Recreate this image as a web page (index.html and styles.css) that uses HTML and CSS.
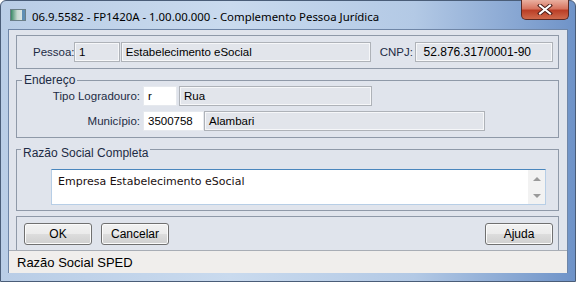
FILE: index.html
```html
<!DOCTYPE html>
<html lang="pt-br">
<head>
    <meta charset="UTF-8">
    <title>Complemento Pessoa Jurídica</title>
    <link rel="stylesheet" href="styles.css">
</head>
<body>
    <div class="window">
        <div class="titlebar">
            <span class="app-icon"><span class="app-icon-bar"></span></span>
            <span class="title">06.9.5582 - FP1420A - 1.00.00.000 - Complemento Pessoa Jurídica</span>
            <span class="close">
                <svg width="16" height="11" viewBox="0 0 16 11">
                    <path d="M3 1.5 L13 9.5 M13 1.5 L3 9.5" stroke="#4a1d18" stroke-width="4" stroke-linecap="square"/>
                    <path d="M3 1.5 L13 9.5 M13 1.5 L3 9.5" stroke="#ffffff" stroke-width="2" stroke-linecap="square"/>
                </svg>
            </span>
        </div>

        <div class="client">
            <div class="panel pessoa">
                <span class="label lbl-pessoa">Pessoa:</span>
                <span class="field ro w-cod">1</span>
                <span class="field ro w-nome">Estabelecimento eSocial</span>
                <span class="label lbl-cnpj">CNPJ:</span>
                <span class="field ro w-cnpj">52.876.317/0001-90</span>
            </div>

            <fieldset class="group endereco">
                <legend>Endereço</legend>
                <div class="form-row">
                    <span class="label row-label">Tipo Logradouro:</span>
                    <span class="field edit w-tipo">r</span>
                    <span class="field ro w-rua">Rua</span>
                </div>
                <div class="form-row">
                    <span class="label row-label">Município:</span>
                    <span class="field edit w-mun">3500758</span>
                    <span class="field ro w-munnome">Alambari</span>
                </div>
            </fieldset>

            <fieldset class="group razao">
                <legend>Razão Social Completa</legend>
                <div class="memo">
                    <span class="memo-text">Empresa Estabelecimento eSocial</span>
                    <span class="scroll">
                        <span class="arrow up"></span>
                        <span class="arrow down"></span>
                    </span>
                </div>
            </fieldset>

            <div class="panel buttons">
                <button class="btn">OK</button>
                <button class="btn">Cancelar</button>
                <button class="btn push-right">Ajuda</button>
            </div>

            <div class="statusbar">Razão Social SPED</div>
        </div>
    </div>
</body>
</html>
```

FILE: styles.css
```css
body {
    margin: 0;
    background-color: #ffffff;
}
.window {
    width: 576px;
    height: 282px;
    box-sizing: border-box;
    padding: 0 7px 8px 7px;
    display: flex;
    flex-direction: column;
    border-radius: 6px 6px 0 0;
    border: 1px solid #4a5d78;
    background: linear-gradient(to right, #b9cde6 0%, #c9daee 40%, #b3c9e5 72%, #6f93c8 100%);
}
.titlebar {
    height: 28px;
    display: flex;
    align-items: center;
    flex-shrink: 0;
}
.app-icon {
    width: 14px;
    height: 10px;
    margin: 0 6px 0 2px;
    background: linear-gradient(to right, #3a8a66, #c7d9d0 45%, #e8eef0);
    border: 1px solid #6b7f88;
    display: flex;
    justify-content: flex-end;
}
.app-icon-bar {
    width: 3px;
    background-color: #5f8fb5;
}
.title {
    font-family: "Noto Sans", sans-serif;
    font-size: 11.4px;
    color: #000000;
    margin-top: 2px;
}
.close {
    margin-left: auto;
    align-self: flex-start;
    margin-top: -1px;
    margin-right: -1px;
    width: 48px;
    height: 20px;
    display: flex;
    align-items: center;
    justify-content: center;
    border: 1px solid #5a2a25;
    border-top: none;
    border-radius: 0 0 5px 5px;
    box-sizing: border-box;
    background: linear-gradient(to bottom, #eab0a0 0%, #d77560 45%, #bb3f27 55%, #cf6a4c 100%);
}
.client {
    flex: 1;
    display: flex;
    flex-direction: column;
    background-color: #e0e4ec;
    border: 1px solid #6f86a7;
    border-bottom: none;
    font-family: "Liberation Sans", Arial, sans-serif;
    font-size: 11px;
}
.panel {
    display: flex;
    align-items: center;
    margin: 0 8px 0 7px;
    border: 1px solid #8f99a8;
}
.pessoa {
    margin-top: 5px;
    height: 34px;
    box-sizing: border-box;
    padding: 0 5px 0 16px;
}
.label {
    color: #1d2b44;
    white-space: nowrap;
    font-size: 11.5px;
}
.lbl-pessoa {
    width: 38px;
    padding-right: 3px;
}
.lbl-cnpj {
    margin-left: 9px;
    width: 35px;
}
.field {
    height: 20px;
    box-sizing: border-box;
    display: flex;
    align-items: center;
    padding-left: 4px;
    color: #000000;
    white-space: nowrap;
    font-size: 11.5px;
}
.ro {
    background-color: #e2e5eb;
    border: 1px solid #aeb2b8;
    box-shadow: inset 0 0 0 1px #f6f7f9;
}
.edit {
    background-color: #ffffff;
    border: 1px solid #e6e9ee;
}
.w-cod { width: 46px; }
.w-nome { width: 251px; margin-left: 1px; }
.w-cnpj { width: 139px; font-size: 12px; padding-left: 8px; }
.w-tipo { width: 34px; }
.w-rua { width: 193px; margin-left: 2px; }
.w-mun { width: 61px; }
.w-munnome { width: 281px; margin-left: 0; }

.group {
    margin: 5px 8px 0 7px;
    border: 1px solid #8f99a8;
    padding: 0 0 6px 0;
    min-width: 0;
}
.group legend {
    font-size: 12px;
    color: #1d2b44;
    padding: 0 2px;
    margin-left: 5px;
}
.endereco legend {
    line-height: 12px;
}
.form-row {
    display: flex;
    align-items: center;
    margin-top: 0;
}
.form-row + .form-row {
    margin-top: 5px;
}
.row-label {
    width: 123px;
    padding-right: 3px;
    text-align: right;
}

.razao {
    margin-top: 2px;
    padding-bottom: 5px;
}
.razao legend {
    line-height: 10px;
    padding-top: 8px;
    margin-left: 4px;
}
.memo {
    margin: 11px 12px 0 34px;
    height: 36px;
    box-sizing: border-box;
    background-color: #ffffff;
    border: 1px solid #b7cee6;
    border-top-color: #4a86bd;
    display: flex;
}
.memo-text {
    flex: 1;
    padding: 5px 0 0 6px;
    font-family: "DejaVu Sans", sans-serif;
    font-size: 11px;
    color: #1a0f0f;
}
.scroll {
    width: 17px;
    background-color: #f2f2f2;
    display: flex;
    flex-direction: column;
    justify-content: space-around;
    align-items: center;
}
.arrow {
    width: 0;
    height: 0;
    border-left: 4px solid transparent;
    border-right: 4px solid transparent;
}
.arrow.up {
    border-bottom: 4px solid #9a9a9a;
}
.arrow.down {
    border-top: 4px solid #9a9a9a;
}

.buttons {
    margin-top: 5px;
    height: 34px;
    box-sizing: border-box;
    padding: 0 5px 0 7px;
    gap: 9px;
    border-bottom: none;
}
.btn {
    width: 68px;
    height: 22px;
    font-family: "Liberation Sans", Arial, sans-serif;
    font-size: 12px;
    color: #000000;
    border: 1px solid #707070;
    border-radius: 3px;
    background: linear-gradient(to bottom, #f2f2f2 0%, #ebebeb 50%, #dddddd 51%, #cfcfcf 100%);
    box-shadow: inset 0 0 0 1px #fbfbfb;
    padding: 0;
}
.push-right {
    margin-left: auto;
}
.statusbar {
    flex: 1;
    display: flex;
    align-items: center;
    padding-left: 8px;
    margin-top: 0;
    background-color: #f0eeec;
    border-top: 1px solid #a8adb5;
    font-size: 13px;
    color: #000000;
}
```
